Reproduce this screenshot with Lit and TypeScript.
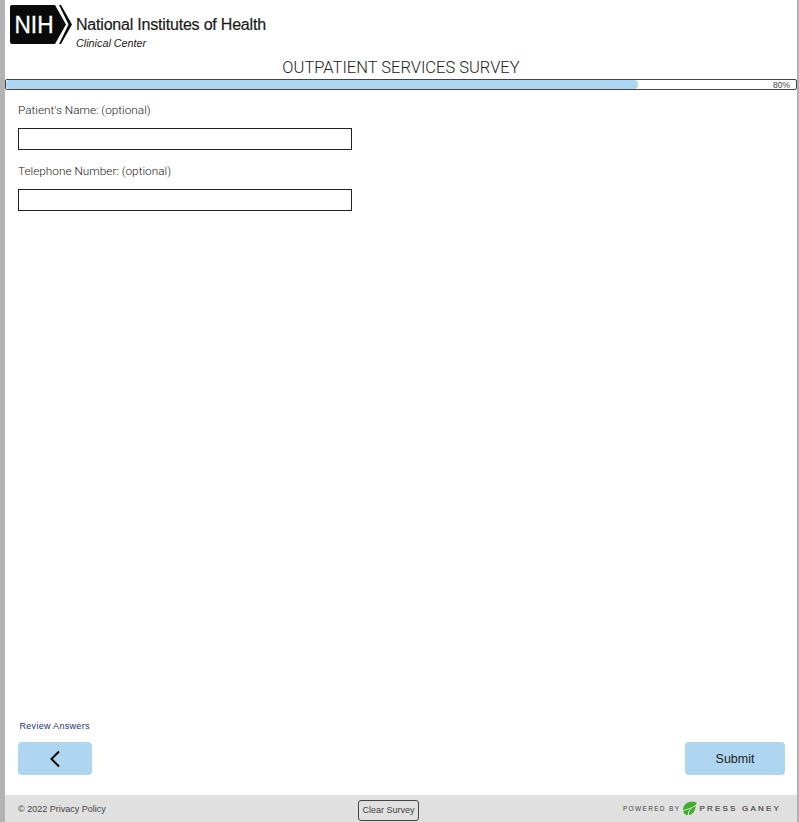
import { LitElement, html, css } from "lit";
import { customElement } from "lit/decorators.js";

@customElement("app-root")
export class AppRoot extends LitElement {
  static styles = css`
    :host { display: block; }
    * { box-sizing: border-box; }
    .page {
      height: 822px; display: flex; flex-direction: column;
      border-left: 5px solid #b2b2b2; border-right: 2px solid #b2b2b2;
      background: #fff; color: #333;
      font-family: "Liberation Sans", Arial, sans-serif; font-weight: 400;
    }
    .brand { display: flex; height: 54px; padding: 5px 0 0 5px; gap: 4px; align-items: flex-start; }
    .nih { width: 62px; height: 40px; display: block; }
    .names { display: flex; flex-direction: column; padding-top: 11px; color: #1a1a1a; }
    .org { font-size: 16px; line-height: 18px; letter-spacing: -0.2px; -webkit-text-stroke: 0.2px #1a1a1a; }
    .sub { font-size: 10.8px; line-height: 14px; font-style: italic; margin-top: 2px; }
    h1 { margin: 0; font-family: Roboto, "Liberation Sans", sans-serif; font-size: 16.5px; line-height: 26px; font-weight: 300; text-align: center; color: #222; height: 25px; padding-top: 1px; }
    .progress { height: 11px; border: 1px solid #444; border-radius: 2px; position: relative; background: #fff; }
    .bar { height: 100%; width: 80%; background: #aed6f1; border-radius: 4px; }
    .pct { position: absolute; right: 6px; top: 1px; font-size: 8.5px; line-height: 9px; color: #444; }
    main { flex: 1; padding: 13px 13px 0; }
    label { display: block; font-family: Roboto, "Liberation Sans", sans-serif; font-weight: 300; font-size: 11.8px; line-height: 14px; color: #222; }
    .field { margin-bottom: 14px; }
    input { display: block; width: 334px; height: 22px; margin-top: 11px; border: 1px solid #222; background: #fff; padding: 0; border-radius: 0; }
    .review { padding: 0 15px 0 14.5px; font-size: 9px; line-height: 11px; letter-spacing: 0.3px; color: #1a3478; }
    .nav { display: flex; justify-content: space-between; padding: 10px 12px 20px 13px; }
    button { font-family: inherit; border: 0; cursor: pointer; }
    .back, .submit { height: 33px; background: #aed6f1; border-radius: 4px; display: flex; align-items: center; justify-content: center; }
    .back { width: 74px; }
    .submit { width: 100px; font-size: 12.5px; color: #222; }
    footer { height: 27px; background: #e0e0e0; display: grid; grid-template-columns: 340px auto 1fr; align-items: center; padding: 0 16px 0 13px; font-size: 9px; color: #444; }
    .clear { height: 21px; width: 61px; padding: 0 0 2px; font-size: 9px; color: #444; background: #e0e0e0; border: 1px solid #444; border-radius: 3px; margin-top: 4px; }
    .powered { justify-self: end; display: flex; align-items: center; gap: 2px; font-size: 6.5px; letter-spacing: 1.35px; color: #444; white-space: nowrap; }
    .ganey { font-size: 8px; letter-spacing: 2.2px; -webkit-text-stroke: 0.2px #444; }
    .leaf { width: 15px; height: 15px; display: block; }
  `;

  render() {
    return html`
      <div class="page">
        <header class="brand">
          <svg class="nih" viewBox="0 0 62 40" aria-label="NIH">
            <path d="M2 0H45L56 19.5L45 39H2Q0 39 0 37V2Q0 0 2 0Z" fill="#0a0a0a" />
            <path d="M49 0H51L62 19.5L51 39H49L58.5 19.5Z" fill="#0a0a0a" />
            <text x="4.5" y="28" font-family="Liberation Sans" font-size="23" fill="#fff" stroke="#fff" stroke-width="0.3" textLength="39" lengthAdjust="spacingAndGlyphs">NIH</text>
          </svg>
          <div class="names">
            <div class="org">National Institutes of Health</div>
            <div class="sub">Clinical Center</div>
          </div>
        </header>
        <h1>OUTPATIENT SERVICES SURVEY</h1>
        <div class="progress">
          <div class="bar"></div>
          <span class="pct">80%</span>
        </div>
        <main>
          <div class="field">
            <label for="n">Patient's Name: (optional)</label>
            <input id="n" type="text" />
          </div>
          <div class="field">
            <label for="t">Telephone Number: (optional)</label>
            <input id="t" type="text" />
          </div>
        </main>
        <div class="review">Review Answers</div>
        <div class="nav">
          <button class="back" aria-label="Back">
            <svg width="12" height="18" viewBox="0 0 12 18"><path d="M10 1.5L2.5 9L10 16.5" fill="none" stroke="#0a0a0a" stroke-width="2" /></svg>
          </button>
          <button class="submit">Submit</button>
        </div>
        <footer>
          <div>© 2022 Privacy Policy</div>
          <button class="clear">Clear Survey</button>
          <div class="powered">
            <span>POWERED BY</span>
            <svg class="leaf" viewBox="0 0 15 15">
              <path d="M7.5 1C11 .5 13 1 14.5 1.5C14 4 13.5 6 13 8C12 12 9 14 6 14C3 14 1 12 1 8.5C1 5 4 1.5 7.5 1Z" fill="#3fae2a" />
              <path d="M1 9.5C4 8.5 9 8 14 4M6.5 14C6 11.5 7 9.5 9 7.5" fill="none" stroke="#e0e0e0" stroke-width="1" />
            </svg>
            <span class="ganey">PRESS GANEY</span>
          </div>
        </footer>
      </div>
    `;
  }
}
